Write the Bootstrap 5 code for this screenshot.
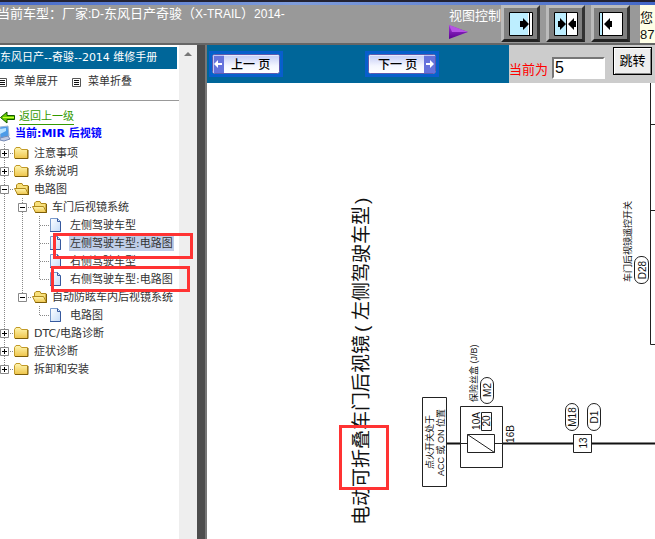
<!DOCTYPE html>
<html lang="zh-CN">
<head>
<meta charset="utf-8">
<meta name="viewport" content="width=device-width, initial-scale=1">
<title>东风日产奇骏 2014 维修手册</title>
<link href="https://cdn.jsdelivr.net/npm/bootstrap@5.3.0/dist/css/bootstrap.min.css" rel="stylesheet">
<style>
body{font-family:"Liberation Sans","Noto Sans CJK SC",sans-serif;font-size:13px;line-height:16px;color:#222;background:#fff}
button{border-radius:0;padding:0}
.top-edge{height:5px;border-top:2px solid #223;background:linear-gradient(90deg,#4468c8,#7f9ddb 45%,#4468c8)}
.topbar{background:#999;height:40px;border-bottom:2px solid #666;color:#fff}
.car-title{margin-left:-3px;padding-top:1px}
.car-title span{font-size:12px}
.view-label{padding-top:3px;width:52px}
.view-set{gap:6px}
.view-btn{width:39px;height:37px;border:solid;border-width:3px;border-color:#bbb #333 #222 #bbb;background:#808080}
.user-box{width:15px;background:#ffffe6;color:#111;font-size:13px;line-height:17px;padding-top:4px;margin-left:10px}
.side{width:197px;font-family:"DejaVu Sans","Noto Sans CJK SC",sans-serif;font-size:11px;line-height:18px}
.side-head{background:#069;color:#fff;height:22px;line-height:22px;margin:2px 2px 0 0}
.side-menu{height:32px;margin-left:-2px;gap:14px;padding-bottom:5px;border-bottom:1px solid #999}
.side-menu button{color:#333;gap:7px}
.side-scroll{width:18px;background:#eee;padding-top:6px}
.splitter{width:8px;background:#4d4d4d}
.back-row{padding-top:8px}
.back-row a{color:#390;line-height:15px;border-bottom:1px solid #390}
.current-row{color:#00f;height:18px;margin-bottom:1px}
.tree{margin-left:-5px}
.tree ul,.tree{list-style:none;padding:0;margin-bottom:0}
.tree-row{height:18px}
.tree-row a{color:#333;margin-left:2px;padding:0 1px;line-height:15px}
.tree-row a.chosen{background:#bfcde8}
.tree-row button,.tree-row svg{width:18px;height:18px;flex:none}
.tree-row button{display:block}
.red-frame{position:absolute;border:3px solid #f33;pointer-events:none}
.frame-a{left:53px;top:188px;width:140px;height:26px}
.frame-b{left:51px;top:221px;width:139px;height:26px}
.viewer{border-left:2px solid #777}
.pager{background:#069;height:38px}
.page-set{gap:82px;padding-left:2px}
.page-btn{border:2px solid #0a5ccc;background:#06c;height:26px}
.page-btn svg{display:block}
.jump{background:#ccc;width:146px}
.jump label{color:red;padding-top:12px}
.jump input{width:53px;height:22px;border:2px solid;border-color:#777 #fff #fff #777;margin-top:8px;padding:0 1px;font-size:16px;border-radius:0}
.jump button{width:39px;height:28px;border:1px solid #000;box-shadow:inset 1px 1px #fff,inset -1px -1px #888;background:#eee;margin-bottom:6px;color:#000}
.sheet text{fill:#111}
</style>
<script src="https://cdn.jsdelivr.net/npm/bootstrap@5.3.0/dist/js/bootstrap.bundle.min.js"></script>
</head>
<body class="d-flex flex-column vh-100 overflow-hidden">
<svg width="0" height="0" class="position-absolute" aria-hidden="true">
  <defs>
    <linearGradient id="gold" x2="0" y2="1"><stop stop-color="#fff6b0"/><stop offset="1" stop-color="#eec44a"/></linearGradient>
    <linearGradient id="paper" x2="1" y2="1"><stop stop-color="#fff"/><stop offset="1" stop-color="#c5dcf8"/></linearGradient>
    <linearGradient id="face" x2="0" y2="1"><stop stop-color="#bfc8f4"/><stop offset=".6" stop-color="#f4f6ff"/><stop offset="1" stop-color="#fff"/></linearGradient>
    <linearGradient id="violet" x2="0" y2="1"><stop stop-color="#a238d8"/><stop offset="1" stop-color="#5a0090"/></linearGradient>
  </defs>
  <symbol id="plus" viewBox="0 0 18 18"><path d="M9.500 0V18M9 9.500H18" stroke="#888" stroke-dasharray="1 1"/><path d="M5.500 5.500h8v8h-8z" fill="#fff" stroke="#888"/><path d="M7 9.500h5M9.500 7v5" stroke="#000"/></symbol>
  <symbol id="minus" viewBox="0 0 18 18"><path d="M9.500 0V18M9 9.500H18" stroke="#888" stroke-dasharray="1 1"/><path d="M5.500 5.500h8v8h-8z" fill="#fff" stroke="#888"/><path d="M7 9.500h5" stroke="#000"/></symbol>
  <symbol id="pluslast" viewBox="0 0 18 18"><path d="M9.500 0V9M9 9.500H18" stroke="#888" stroke-dasharray="1 1"/><path d="M5.500 5.500h8v8h-8z" fill="#fff" stroke="#888"/><path d="M7 9.500h5M9.500 7v5" stroke="#000"/></symbol>
  <symbol id="minuslast" viewBox="0 0 18 18"><path d="M9.500 0V9M9 9.500H18" stroke="#888" stroke-dasharray="1 1"/><path d="M5.500 5.500h8v8h-8z" fill="#fff" stroke="#888"/><path d="M7 9.500h5" stroke="#000"/></symbol>
  <symbol id="line" viewBox="0 0 18 18"><path d="M9.500 0V18" stroke="#888" stroke-dasharray="1 1"/></symbol>
  <symbol id="tee" viewBox="0 0 18 18"><path d="M8.500 0V18M9 9.500H18" stroke="#888" stroke-dasharray="1 1"/></symbol>
  <symbol id="ell" viewBox="0 0 18 18"><path d="M8.500 0V9M9 9.500H18" stroke="#888" stroke-dasharray="1 1"/></symbol>
  <symbol id="folder" viewBox="0 0 18 18"><path d="M1.500 14V5.500L3 3.500h4l1.500 2h6v9H2z" fill="url(#gold)" stroke="#c29a28"/><path d="M2 14.500h13V6" fill="none" stroke="#7d5d08"/></symbol>
  <symbol id="open" viewBox="0 0 18 18"><path d="M3.500 8V5l1.500-1.500h4l1 2h5v9H4" fill="#f8e07a" stroke="#b08a1c"/><path d="M1.500 8.500h11l3 6H4.500z" fill="url(#gold)" stroke="#b08a1c"/><path d="M4.500 14.500h11V6" fill="none" stroke="#7d5d08"/></symbol>
  <symbol id="doc" viewBox="0 0 18 18"><path d="M1.500 2.500h7l3 3v10h-10z" fill="url(#paper)" stroke="#7799cc"/><path d="M8.500 2.500v3h3M11.500 6v9.500H1" fill="none" stroke="#36589d"/></symbol>
  <symbol id="listbox" viewBox="0 0 9 9"><path d="M.5.5h8v8h-8z" fill="#fff" stroke="#555"/><path d="M2 2.500h5M2 4.500h5M2 6.500h5" stroke="#111"/></symbol>
</svg>

<div class="top-edge flex-shrink-0"></div>
<header class="topbar d-flex flex-shrink-0 overflow-hidden">
  <div class="car-title text-nowrap">当前车型：厂家<span>:D-</span>东风日产奇骏（<span>X-TRAIL</span>）<span>2014-</span></div>
  <div class="ms-auto d-flex flex-shrink-0">
    <div class="view-label text-nowrap">视图控制
      <svg class="d-block" width="20" height="16" aria-hidden="true"><path d="M0 1 19 8 0 15z" fill="url(#violet)"/><path d="M0 1 19 8H3z" fill="#b653e4"/></svg>
    </div>
    <div class="view-set d-flex">
      <button type="button" class="view-btn" aria-label="显示左栏"><svg class="d-block mx-auto" width="24" height="24"><path d="M.5.5h23v23H.5z" fill="#fff" stroke="#000"/><path d="M1 1h18v22H1z" fill="#bdeeff"/><path d="M20.500 0v24" stroke="#000"/><path d="M11 9h3V6l6 6-6 6v-3h-3z"/></svg></button>
      <button type="button" class="view-btn" aria-label="显示两栏"><svg class="d-block mx-auto" width="24" height="24"><path d="M.5.5h23v23H.5z" fill="#fff" stroke="#000"/><path d="M1 1h11v22H1z" fill="#bdeeff"/><path d="M12.500 0v24" stroke="#000"/><path d="M4 9h2V6l6 6-6 6v-3H4zM22 9h-2V6l-6 6 6 6v-3h2z"/></svg></button>
      <button type="button" class="view-btn" aria-label="显示右栏"><svg class="d-block mx-auto" width="24" height="24"><path d="M.5.5h23v23H.5z" fill="#fff" stroke="#000"/><path d="M1 1h2v22H1z" fill="#bdeeff"/><path d="M3.500 0v24" stroke="#000"/><path d="M13 9h-2V6l-6 6 6 6v-3h2z"/></svg></button>
    </div>
    <div class="user-box text-nowrap">您<br>87</div>
  </div>
</header>

<div class="d-flex flex-grow-1 overflow-hidden">
  <aside class="side d-flex flex-shrink-0 position-relative">
    <nav class="flex-grow-1 text-nowrap">
      <div class="side-head">东风日产--奇骏--2014 维修手册</div>
      <div class="side-menu d-flex align-items-center">
        <button type="button" class="border-0 bg-transparent d-flex align-items-center"><svg width="9" height="9"><use href="#listbox"/></svg>菜单展开</button>
        <button type="button" class="border-0 bg-transparent d-flex align-items-center"><svg width="9" height="9"><use href="#listbox"/></svg>菜单折叠</button>
      </div>
      <div class="back-row d-flex align-items-center">
        <svg width="15" height="13" class="me-1" aria-hidden="true"><path d="M.5 6.500 7 1v3.500h7.500v4H7V12z" fill="#6c0" stroke="#150"/><path d="M3 6.500h11" stroke="#cf3"/></svg>
        <a href="#" class="text-decoration-none">返回上一级</a>
      </div>
      <div class="current-row d-flex align-items-center fw-bold">
        <svg width="11" height="18" class="me-1" aria-hidden="true"><path d="M0 2 8 1l1 10-9 2z" fill="#4c9be8" stroke="#9db4d4"/><path d="M0 4l6-1v3L0 9z" fill="#b8e2ff"/><path d="M0 13l8-2 2 3-6 2-4-1z" fill="#c0cbe5" stroke="#7388b5"/></svg>
        当前:MIR 后视镜
      </div>
      <ul class="tree">
        <li><div class="tree-row d-flex align-items-center"><button type="button" class="border-0 bg-transparent" aria-label="展开"><svg class="d-block"><use href="#plus"/></svg></button><svg><use href="#folder"/></svg><a href="#" class="text-decoration-none">注意事项</a></div></li>
        <li><div class="tree-row d-flex align-items-center"><button type="button" class="border-0 bg-transparent" aria-label="展开"><svg class="d-block"><use href="#plus"/></svg></button><svg><use href="#folder"/></svg><a href="#" class="text-decoration-none">系统说明</a></div></li>
        <li><div class="tree-row d-flex align-items-center"><button type="button" class="border-0 bg-transparent" aria-label="收起"><svg class="d-block"><use href="#minus"/></svg></button><svg><use href="#open"/></svg><a href="#" class="text-decoration-none">电路图</a></div>
          <ul>
            <li><div class="tree-row d-flex align-items-center"><svg><use href="#line"/></svg><button type="button" class="border-0 bg-transparent" aria-label="收起"><svg class="d-block"><use href="#minus"/></svg></button><svg><use href="#open"/></svg><a href="#" class="text-decoration-none">车门后视镜系统</a></div>
              <ul>
                <li><div class="tree-row d-flex align-items-center"><svg><use href="#line"/></svg><svg><use href="#line"/></svg><svg><use href="#tee"/></svg><svg><use href="#doc"/></svg><a href="#" class="text-decoration-none">左侧驾驶车型</a></div></li>
                <li><div class="tree-row d-flex align-items-center"><svg><use href="#line"/></svg><svg><use href="#line"/></svg><svg><use href="#tee"/></svg><svg><use href="#doc"/></svg><a href="#" class="chosen text-decoration-none">左侧驾驶车型:电路图</a></div></li>
                <li><div class="tree-row d-flex align-items-center"><svg><use href="#line"/></svg><svg><use href="#line"/></svg><svg><use href="#tee"/></svg><svg><use href="#doc"/></svg><a href="#" class="text-decoration-none">右侧驾驶车型</a></div></li>
                <li><div class="tree-row d-flex align-items-center"><svg><use href="#line"/></svg><svg><use href="#line"/></svg><svg><use href="#ell"/></svg><svg><use href="#doc"/></svg><a href="#" class="text-decoration-none">右侧驾驶车型:电路图</a></div></li>
              </ul>
            </li>
            <li><div class="tree-row d-flex align-items-center"><svg><use href="#line"/></svg><button type="button" class="border-0 bg-transparent" aria-label="收起"><svg class="d-block"><use href="#minuslast"/></svg></button><svg><use href="#open"/></svg><a href="#" class="text-decoration-none">自动防眩车内后视镜系统</a></div>
              <ul>
                <li><div class="tree-row d-flex align-items-center"><svg><use href="#line"/></svg><svg></svg><svg><use href="#ell"/></svg><svg><use href="#doc"/></svg><a href="#" class="text-decoration-none">电路图</a></div></li>
              </ul>
            </li>
          </ul>
        </li>
        <li><div class="tree-row d-flex align-items-center"><button type="button" class="border-0 bg-transparent" aria-label="展开"><svg class="d-block"><use href="#plus"/></svg></button><svg><use href="#folder"/></svg><a href="#" class="text-decoration-none">DTC/电路诊断</a></div></li>
        <li><div class="tree-row d-flex align-items-center"><button type="button" class="border-0 bg-transparent" aria-label="展开"><svg class="d-block"><use href="#plus"/></svg></button><svg><use href="#folder"/></svg><a href="#" class="text-decoration-none">症状诊断</a></div></li>
        <li><div class="tree-row d-flex align-items-center"><button type="button" class="border-0 bg-transparent" aria-label="展开"><svg class="d-block"><use href="#pluslast"/></svg></button><svg><use href="#folder"/></svg><a href="#" class="text-decoration-none">拆卸和安装</a></div></li>
      </ul>
    </nav>
    <div class="side-scroll flex-shrink-0"><svg class="d-block mx-auto" width="8" height="5" aria-hidden="true"><path d="M0 5 4 1 8 5z" fill="#777"/></svg></div>
    <div class="red-frame frame-a"></div>
    <div class="red-frame frame-b"></div>
  </aside>
  <div class="splitter flex-shrink-0"></div>

  <main class="viewer flex-grow-1 overflow-hidden">
    <div class="pager d-flex justify-content-between">
      <div class="page-set d-flex align-items-center">
        <button type="button" class="page-btn" aria-label="上一页"><svg width="70" height="22"><rect x="1.500" y="1.500" width="67" height="19" rx="2" fill="url(#face)" stroke="#5d58ae"/><path d="M2 2h11v18H2z" fill="#6572dc"/><path d="M2.500 20V2.500H68" fill="none" stroke="#fff" stroke-opacity=".6"/><path d="m3 11 4-4v3h4v2H7v3z" fill="#fff"/><text x="20" y="16" font-size="12" font-weight="500">上一 页</text></svg></button>
        <button type="button" class="page-btn" aria-label="下一页"><svg width="70" height="22"><rect x="1.500" y="1.500" width="67" height="19" rx="2" fill="url(#face)" stroke="#5d58ae"/><path d="M57 2h11v18H57z" fill="#6572dc"/><path d="M2.500 20V2.500H68" fill="none" stroke="#fff" stroke-opacity=".6"/><path d="m67 11-4-4v3h-4v2h4v3z" fill="#fff"/><text x="11" y="16" font-size="12" font-weight="500">下一 页</text></svg></button>
      </div>
      <form class="jump d-flex align-items-center flex-shrink-0 text-nowrap">
        <label for="pageno" class="me-1">当前为</label>
        <input id="pageno" type="text" value="5">
        <button type="button" class="ms-2">跳转</button>
      </form>
    </div>
    <svg class="sheet d-block" width="448" height="456" viewBox="207 83 448 456" font-family="'Liberation Sans','Noto Sans CJK SC',sans-serif" font-size="9" role="img" aria-label="电路图">
      <g fill="none" stroke="#222">
        <path d="M447 443.500H461M502 443.500H574M592 443.500H655" stroke="#111" stroke-width="2"/>
        <path d="M422.500 397.500h24v89h-24zM460.500 406.500h42v61h-42zM467.500 434.500h27v18h-27zM467.500 434.500l27 18M460 443.500h7M495 443.500h7M481.500 412.500h10v18h-10zM573.500 434.500h18v18h-18z"/>
        <path d="M650.500 83V344.500H655M650.500 124.500H655M650.500 210.500H655"/>
        <rect x="480.500" y="377.500" width="13" height="26" rx="6.500"/>
        <rect x="565.500" y="403.500" width="13" height="27" rx="6.500"/>
        <rect x="587.500" y="403.500" width="13" height="27" rx="6.500"/>
        <rect x="634.500" y="256.500" width="14" height="27" rx="6.500"/>
      </g>
      <g font-size="19">
        <text transform="translate(368 525) rotate(-90)">电动可折叠车门后视镜</text>
        <text transform="translate(368 332) rotate(-90)">(</text>
        <text transform="translate(368 320) rotate(-90)">左侧驾驶车型</text>
        <text transform="translate(368 204) rotate(-90)">)</text>
      </g>
      <text transform="translate(433 469) rotate(-90)">点火开关处于</text>
      <text transform="translate(444 476) rotate(-90)">ACC 或 ON 位置</text>
      <text transform="translate(477 402) rotate(-90)">保险丝盒 (J/B)</text>
      <text transform="translate(631 282) rotate(-90)">车门后视镜遥控开关</text>
      <g font-size="10" text-anchor="middle">
        <text transform="translate(491 390) rotate(-90)">M2</text>
        <text transform="translate(480 421) rotate(-90)">10A</text>
        <text transform="translate(490 421) rotate(-90)">20</text>
        <text transform="translate(514 434) rotate(-90)">16B</text>
        <text transform="translate(576 417) rotate(-90)">M18</text>
        <text transform="translate(598 417) rotate(-90)">D1</text>
        <text transform="translate(587 443) rotate(-90)">13</text>
        <text transform="translate(646 270) rotate(-90)">D28</text>
      </g>
      <rect x="340.500" y="426.500" width="47" height="62" fill="none" stroke="#f33" stroke-width="3"/>
    </svg>
  </main>
</div>
</body>
</html>
